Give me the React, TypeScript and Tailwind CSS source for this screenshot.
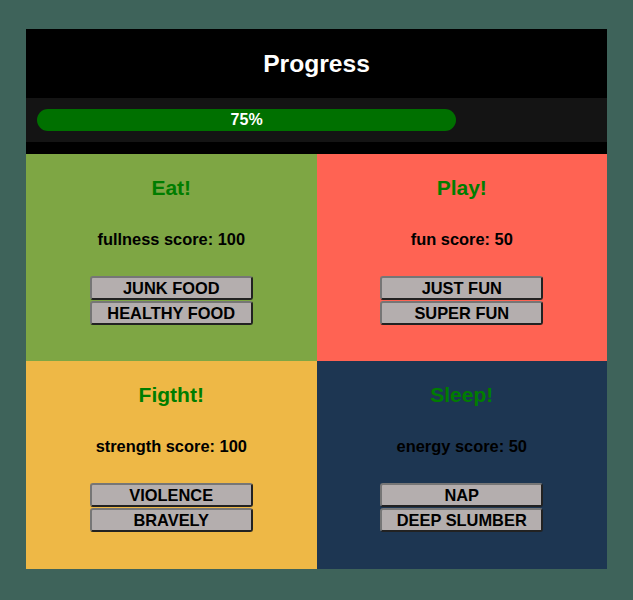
import React from "react";

type Activity = {
  title: string;
  label: string;
  score: number;
  bg: string;
  actions: string[];
};

const activities: Activity[] = [
  { title: "Eat!", label: "fullness", score: 100, bg: "bg-[#7ea644]", actions: ["Junk food", "Healthy food"] },
  { title: "Play!", label: "fun", score: 50, bg: "bg-[#ff6353]", actions: ["Just fun", "Super fun"] },
  { title: "Figtht!", label: "strength", score: 100, bg: "bg-[#eeb846]", actions: ["Violence", "Bravely"] },
  { title: "Sleep!", label: "energy", score: 50, bg: "bg-[#1d3652]", actions: ["Nap", "Deep slumber"] },
];

function Quadrant({ item }: { item: Activity }) {
  return (
    <div className={`${item.bg} h-full flex flex-col items-center pt-[22px]`}>
      <h2 className="text-[21px] leading-[24px] font-bold text-[#007d00]">{item.title}</h2>
      <p className="mt-[29px] text-[16.4px] leading-[20px] font-bold text-black">
        {item.label} score: {item.score}
      </p>
      <div className="mt-[27px] flex flex-col gap-[1px]">
        {item.actions.map((a) => (
          <button
            key={a}
            className="w-[163px] h-[24px] bg-[#b4aeae] border-2 border-t-[#767676] border-l-[#767676] border-r-[#222] border-b-[#222] rounded-[3px] text-[16.4px] leading-[19px] font-bold uppercase text-black"
          >
            {a}
          </button>
        ))}
      </div>
    </div>
  );
}

export default function App() {
  const progress = 75;
  return (
    <div
      className="min-h-[600px] bg-[#3e635a] pt-[29px] px-[26px]"
      style={{ fontFamily: '"Liberation Sans", Arial, sans-serif' }}
    >
      <div className="w-[581px] bg-black">
        {/* Header */}
        <div className="h-[69px] pt-[2px] flex items-center justify-center">
          <h1 className="text-[24.6px] font-bold text-white">Progress</h1>
        </div>

        {/* Progress bar */}
        <div className="h-[44px] bg-[#141414] px-[11px] flex items-center">
          <div className="w-full">
            <div
              className="h-[22px] rounded-full bg-[#007000] flex items-center justify-center text-white font-bold text-[16px]"
              style={{ width: `${progress}%` }}
            >
              {progress}%
            </div>
          </div>
        </div>
        <div className="h-[12px]" />

        {/* Activities */}
        <div className="grid grid-cols-2 grid-rows-[207px_208px]">
          {activities.map((item) => (
            <Quadrant key={item.title} item={item} />
          ))}
        </div>
      </div>
    </div>
  );
}
